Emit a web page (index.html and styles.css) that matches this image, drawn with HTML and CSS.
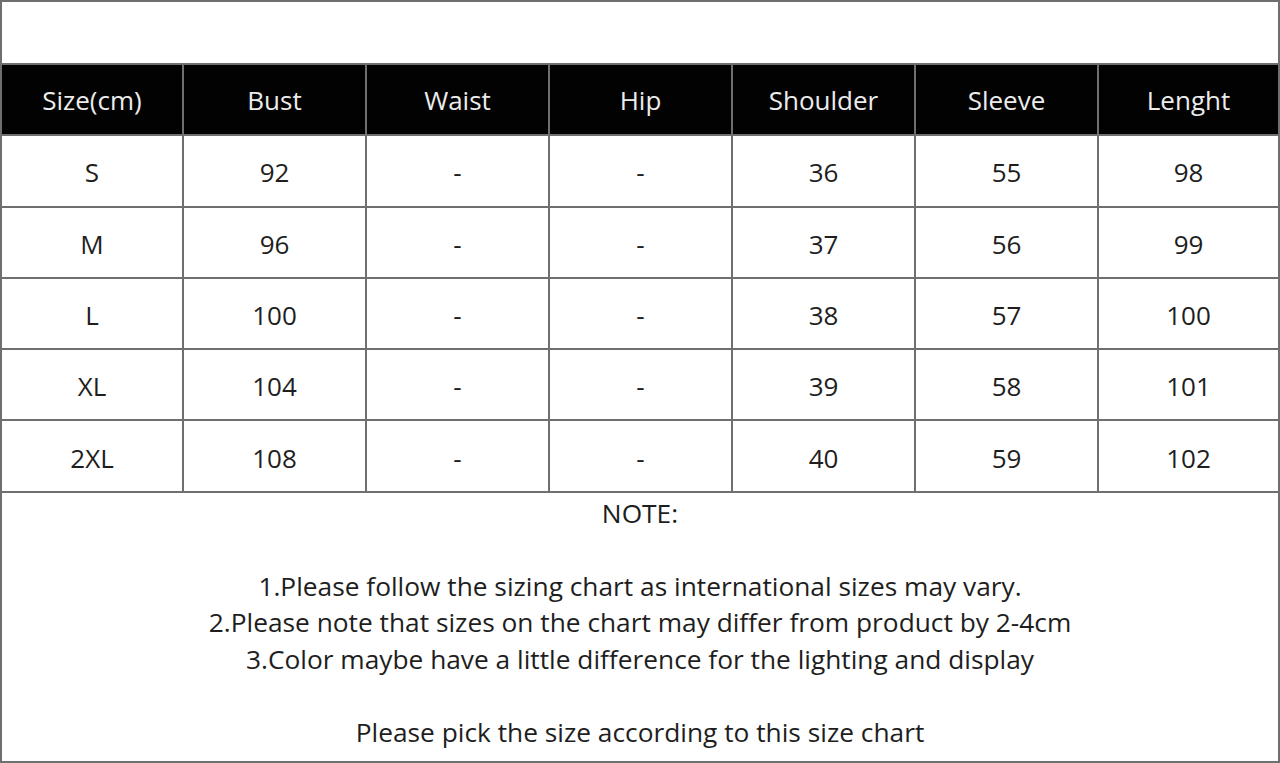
FILE: index.html
```html
<!DOCTYPE html>
<html>
<head>
<meta charset="utf-8">
<link rel="stylesheet" href="styles.css">
</head>
<body>
<div class="sheet">
  <div class="top-space"></div>
  <div class="chart">
    <div class="cell head">Size(cm)</div>
    <div class="cell head">Bust</div>
    <div class="cell head">Waist</div>
    <div class="cell head">Hip</div>
    <div class="cell head">Shoulder</div>
    <div class="cell head">Sleeve</div>
    <div class="cell head">Lenght</div>

    <div class="cell">S</div><div class="cell">92</div><div class="cell">-</div><div class="cell">-</div><div class="cell">36</div><div class="cell">55</div><div class="cell">98</div>
    <div class="cell">M</div><div class="cell">96</div><div class="cell">-</div><div class="cell">-</div><div class="cell">37</div><div class="cell">56</div><div class="cell">99</div>
    <div class="cell">L</div><div class="cell">100</div><div class="cell">-</div><div class="cell">-</div><div class="cell">38</div><div class="cell">57</div><div class="cell">100</div>
    <div class="cell">XL</div><div class="cell">104</div><div class="cell">-</div><div class="cell">-</div><div class="cell">39</div><div class="cell">58</div><div class="cell">101</div>
    <div class="cell">2XL</div><div class="cell">108</div><div class="cell">-</div><div class="cell">-</div><div class="cell">40</div><div class="cell">59</div><div class="cell">102</div>
  </div>
  <div class="notes">
    <p class="line">NOTE:</p>
    <p class="line blank"></p>
    <p class="line">1.Please follow the sizing chart as international sizes may vary.</p>
    <p class="line">2.Please note that sizes on the chart may differ from product by 2-4cm</p>
    <p class="line">3.Color maybe have a little difference for the lighting and display</p>
    <p class="line blank"></p>
    <p class="line">Please pick the size according to this size chart</p>
  </div>
</div>
</body>
</html>
```

FILE: styles.css
```css
html, body {
  margin: 0;
  padding: 0;
  background: #ffffff;
}

.sheet {
  width: 1280px;
  height: 763px;
  box-sizing: border-box;
  border: 2px solid #6f6f6f;
  font-family: "Open Sans", "Noto Sans", "DejaVu Sans", sans-serif;
  color: #1e1e1e;
  overflow: hidden;
  display: flex;
  flex-direction: column;
}

.top-space {
  height: 61px;
  flex: none;
}

.chart {
  flex: none;
  display: grid;
  grid-template-columns: 180px repeat(5, 181px) 1fr;
  grid-auto-rows: 69.3px;
  gap: 2px;
  background: #6f6f6f;
  border-top: 2px solid #6f6f6f;
  border-bottom: 2px solid #6f6f6f;
}

.cell {
  background: #ffffff;
  display: flex;
  align-items: center;
  justify-content: center;
  padding-top: 3px;
  font-size: 26px;
}

.cell.head {
  background: #020202;
  color: #ececec;
  padding-top: 1px;
}

.notes {
  padding-top: 2px;
  text-align: center;
  font-size: 26.3px;
}

.line {
  margin: 0;
  height: 36.5px;
  line-height: 36.5px;
  white-space: nowrap;
}
```
